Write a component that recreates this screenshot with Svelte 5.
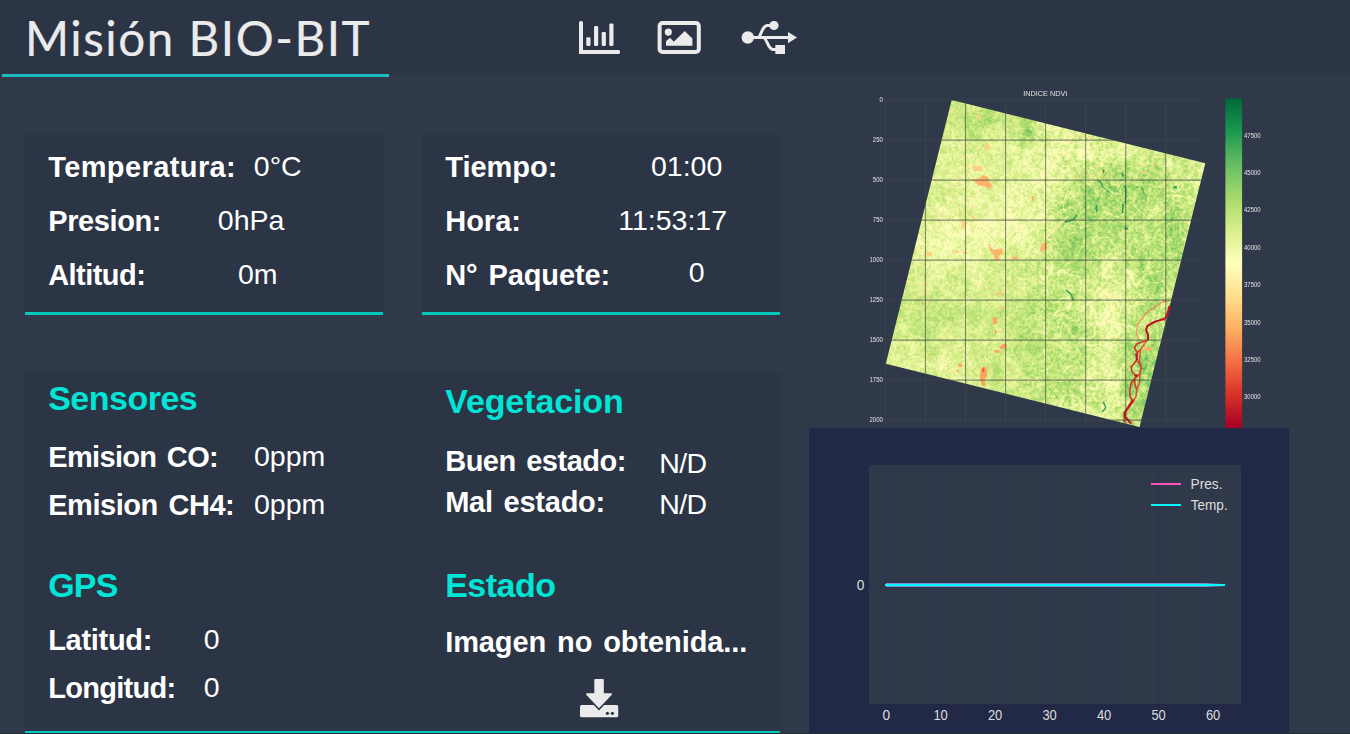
<script>
  import { onMount } from 'svelte';

  const weather = [
    { label: 'Temperatura:', value: '0°C', at: 205.6, ls: 0.4 },
    { label: 'Presion:', value: '0hPa', at: 169.6, ls: -0.4 },
    { label: 'Altitud:', value: '0m', at: 189.8, ls: -0.55 }
  ];
  const timing = [
    { label: 'Tiempo:', value: '01:00', at: 205.8, ls: 0 },
    { label: 'Hora:', value: '11:53:17', at: 173, ls: 0 },
    { label: 'N° Paquete:', value: '0', at: 243.6, ls: -0.1, dy: -3 }
  ];
  const sensors = [
    { label: 'Emision CO:', value: '0ppm', at: 205.8, ls: -0.65 },
    { label: 'Emision CH4:', value: '0ppm', at: 205.8, ls: -0.45 }
  ];
  const gps = [
    { label: 'Latitud:', value: '0', at: 155.6, ls: -0.3 },
    { label: 'Longitud:', value: '0', at: 155.6, ls: -0.7 }
  ];
  const vegetation = [
    { label: 'Buen estado:', value: 'N/D', at: 214, ls: -0.5, dy: 2, vls: -0.6 },
    { label: 'Mal estado:', value: 'N/D', at: 214, ls: -0.25, dy: 2, vls: -0.6 }
  ];

  const mapRows = [0, 250, 500, 750, 1000, 1250, 1500, 1750, 2000];
  const mapCols = [0, 1, 2, 3, 4, 5, 6, 7];
  const scaleTicks = [47500, 45000, 42500, 40000, 37500, 35000, 32500, 30000];
  const timeTicks = [0, 10, 20, 30, 40, 50, 60];

  const ramp = [
    [165, 0, 38], [215, 48, 39], [244, 109, 67], [253, 174, 97], [254, 224, 139],
    [255, 255, 191], [217, 239, 139], [166, 217, 106], [102, 189, 99], [26, 152, 80], [0, 104, 55]
  ];
  const rampStops = ramp.map((c, i) => ({ offset: 1 - i / 10, color: `rgb(${c.join(',')})` })).reverse();

  // x, y, radius x, radius y, index offset
  const regions = [
    [975, 118, 34, 14, 0.06], [1027, 130, 8, 16, 0.11], [990, 225, 55, 32, -0.05],
    [940, 245, 45, 28, -0.03], [965, 165, 50, 25, -0.01], [1030, 190, 20, 40, -0.03],
    [1060, 150, 14, 35, -0.03], [1068, 205, 20, 18, 0.07], [1105, 195, 26, 24, 0.1],
    [1150, 190, 38, 32, 0.07], [1070, 245, 28, 26, 0.08], [1130, 245, 45, 30, 0.05],
    [1175, 240, 14, 45, 0.08], [930, 320, 45, 35, 0.03], [1030, 330, 30, 50, 0.06],
    [1075, 320, 20, 50, 0.06], [1105, 330, 14, 60, -0.04], [1152, 290, 14, 30, 0.09],
    [1133, 380, 14, 45, 0.12], [1150, 360, 12, 35, 0.1], [996, 372, 5, 16, 0.08],
    [940, 364, 60, 7, -0.03], [1060, 385, 40, 18, 0.05], [970, 213, 14, 8, 0.06],
    [1110, 150, 25, 9, -0.03]
  ];

  function hash(x, y, s) {
    let h = Math.imul(x, 374761393) + Math.imul(y, 668265263) + Math.imul(s, 974634777);
    h = Math.imul(h ^ (h >>> 13), 1274126177);
    return ((h ^ (h >>> 16)) >>> 0) / 4294967295;
  }
  function noise(x, y, s) {
    const xi = Math.floor(x), yi = Math.floor(y);
    let u = x - xi, v = y - yi;
    u = u * u * (3 - 2 * u);
    v = v * v * (3 - 2 * v);
    const a = hash(xi, yi, s), b = hash(xi + 1, yi, s);
    const c = hash(xi, yi + 1, s), d = hash(xi + 1, yi + 1, s);
    return a + (b - a) * u + (c - a) * v + (a - b - c + d) * u * v;
  }
  function ndvi(x, y) {
    let v = 0.595;
    for (const [cx, cy, rx, ry, k] of regions) {
      v += k * Math.exp(-(((x - cx) / rx) ** 2 + ((y - cy) / ry) ** 2));
    }
    const green = Math.max(0, Math.min(1, (x - 1000) / 60));
    v += (noise(x / 15, y / 15, 1) - 0.5) * 0.05;
    v += (noise(x / 6, y / 6, 2) - 0.5) * 0.06;
    v += (noise(x / 2.3, y / 2.3, 3) - 0.5) * (0.1 + 0.04 * green);
    v += (hash(x, y, 4) - 0.5) * (0.06 + 0.02 * green);
    const wx = x + noise(x / 9, y / 9, 7) * 12, wy = y + noise(x / 9, y / 9, 8) * 12;
    const ridge = 1 - Math.abs(2 * noise(wx / 14, wy / 14, 5) - 1) * 7;
    if (ridge > 0) v -= ridge * 0.09 * green;
    const fleck = noise(x / 2, y / 2, 9) + noise(x / 22, y / 22, 10) * 0.35;
    if (fleck > 1.13 && (x < 1020 || y < 180)) v = 0.38;
    return Math.max(0.35, Math.min(0.84, v));
  }
  function colorAt(v) {
    const t = v * 10, i = Math.min(9, Math.floor(t)), f = t - i;
    return ramp[i].map((c, k) => c + (ramp[i + 1][k] - c) * f);
  }

  let canvas;
  onMount(() => {
    const ctx = canvas.getContext('2d');
    const img = ctx.createImageData(480, 354);
    for (let y = 0; y < 354; y++) {
      for (let x = 0; x < 480; x++) {
        const [r, g, b] = colorAt(ndvi(x + 809, y + 74));
        img.data.set([r, g, b, 255], (y * 480 + x) * 4);
      }
    }
    ctx.putImageData(img, 0, 0);
    ctx.globalCompositeOperation = 'destination-in';
    ctx.beginPath();
    ctx.moveTo(142.7, 26);
    ctx.lineTo(396.3, 89.2);
    ctx.lineTo(330.5, 353);
    ctx.lineTo(76.8, 289.8);
    ctx.closePath();
    ctx.fill();
  });
</script>

{#snippet readings(rows)}
  {#each rows as r}
    <div class="row">
      <span class="label" style="width:{r.at}px; letter-spacing:{r.ls}px">{r.label}</span>
      <span class="value" style="margin-top:{r.dy ?? -1}px; letter-spacing:{r.vls ?? 0}px">{r.value}</span>
    </div>
  {/each}
{/snippet}

<div class="page">
  <header>
    <h1><span>Misión BIO-BIT</span></h1>
    <nav>
      <svg width="42" height="34" viewBox="579 21 42 34">
        <rect x="579" y="21" width="4" height="33" rx="1.5" />
        <rect x="579" y="50" width="41" height="4" rx="1.5" />
        <rect x="586.3" y="37.3" width="4.2" height="8.7" rx="1.3" />
        <rect x="594" y="26" width="4.2" height="20" rx="1.3" />
        <rect x="601.7" y="32" width="4.2" height="14" rx="1.3" />
        <rect x="609.3" y="23.5" width="4.2" height="22.5" rx="1.3" />
      </svg>
      <svg width="44" height="34" viewBox="657 21 44 34">
        <rect x="659.6" y="23" width="39.2" height="29" rx="3" fill="none" stroke="#ebebeb" stroke-width="4" />
        <circle cx="668.3" cy="32.1" r="3.6" />
        <path d="M666 45.8V41.3L670 37.8L673.8 41.8L684.7 31L692.4 38.4V45.8Z" />
      </svg>
      <svg width="57" height="34" viewBox="741 21 57 34">
        <circle cx="747.8" cy="37.5" r="6.2" />
        <path d="M788 32L797 37.5L788 43.2Z" />
        <circle cx="774" cy="25.5" r="4.6" />
        <rect x="775.3" y="45" width="9.7" height="9" />
        <path d="M752 37.5H789M758.5 37.5C762 34 762 25.5 767.5 25.5H771M764 37.5C767.5 40 768 49.5 773.5 49.5H777" fill="none" stroke="#ebebeb" stroke-width="3" />
      </svg>
    </nav>
  </header>

  <main>
    <div class="data">
      <div class="cards">
        <section class="card">{@render readings(weather)}</section>
        <section class="card">{@render readings(timing)}</section>
      </div>
      <section class="wide">
        <div class="col">
          <h2>Sensores</h2>
          <div class="group sensors">{@render readings(sensors)}</div>
          <h2 class="gps">GPS</h2>
          <div class="group position">{@render readings(gps)}</div>
        </div>
        <div class="col right">
          <h2 class="plants">Vegetacion</h2>
          <div class="group veg">{@render readings(vegetation)}</div>
          <h2 class="status">Estado</h2>
          <p class="label message">Imagen no obtenida...</p>
          <svg class="download" width="39" height="39" viewBox="580 679 39 39">
            <rect x="580" y="705" width="38.2" height="12.2" rx="1.5" />
            <path d="M595 679H603Q603.8 679 603.8 680V693.3H611.4Q612.6 693.6 611.6 695L599 708.3L586.4 695Q585.6 693.6 586.8 693.3H594.3V680Q594.3 679 595 679Z" stroke="#2c3545" stroke-width="3" paint-order="stroke" />
            <circle cx="607.4" cy="713.3" r="1.6" fill="#2c3545" />
            <circle cx="612.4" cy="713.3" r="1.6" fill="#2c3545" />
          </svg>
        </div>
      </section>
    </div>

    <div class="plots">
      <div class="map">
        <canvas bind:this={canvas} width="480" height="354"></canvas>
        <svg width="480" height="354" viewBox="809 74 480 354">
          <defs>
            <linearGradient id="ramp" x1="0" y1="0" x2="0" y2="1">
              {#each rampStops as s}<stop offset={s.offset} stop-color={s.color} />{/each}
            </linearGradient>
          </defs>

          <g transform="translate(860 80) scale(.3333)" fill="#fdb56c">
            <path d="M330 299L355 297L370 285L385 292L388 305L398 318L387 326L372 318L355 317L345 305Z" />
            <path d="M336 262L345 258H366L368 273L342 274Z" fill="#fdd080" />
            <path d="M385 496L400 510L425 505L430 520L415 528L420 540H405L400 522L390 512Z" />
            <path d="M455 530H472L476 538H458ZM545 490L560 488L562 505L548 515L540 512ZM515 348H522V362H516Z" />
            <path d="M198 515H215L217 528L200 530ZM375 195L388 190L390 208L375 210ZM280 512H298V518H283ZM308 514L325 516L322 521H310ZM305 422H314V444H305Z" fill="#fdd080" />
            <path d="M398 712L410 712L412 730L400 735ZM405 745L412 758L404 762ZM417 800L432 790L442 795L438 806L420 808ZM362 870L370 858L380 865L382 885L374 900L376 920L364 915L360 895ZM295 852L306 850L307 860L296 862ZM288 870H298L294 878ZM404 810H418V818H402Z" fill="#fca55d" />
            <path d="M410 640L425 632L425 645L412 648ZM418 680L436 678L438 685H420Z" fill="#fdc777" />
            <path d="M366 863L374 866L372 876L366 876Z" fill="#ee6040" />
          </g>
          <path d="M1045 239L1052 231L1060 224L1068 216" fill="none" stroke="#f7efa0" stroke-width="3" stroke-opacity=".8" />
          <g transform="translate(1040 80) scale(.3333)" fill="none" stroke="#1d9150" stroke-width="4" stroke-opacity=".9">
            <path d="M172 300L183 308L189 322M246 280L250 290M253 316L258 330L256 370M250 372L247 400M110 405L100 420L74 426M172 374L168 384L171 398M191 268V280" />
            <path d="M305 320L312 340L320 348M189 322L215 342" stroke-width="2.5" />
            <path d="M78 630L92 642L101 662M190 965L197 983L187 996" />
            <path d="M400 322H411M253 446H265" stroke-width="8" stroke-opacity=".7" />
          </g>
          <g transform="translate(1040 250) scale(.3333)" fill="none" stroke-linejoin="round">
            <path d="M388 152L368 155L345 170L318 190L292 225L290 250L298 272" stroke="#f58a5b" stroke-width="3.5" />
            <path d="M312 292L332 290L335 300L318 306Z" fill="#fdb366" />
            <path d="M318 272L290 282L283 293L292 308L290 330L273 352L277 368L290 378L273 400L269 425L272 445L282 452L252 488L253 518M300 300L290 310M292 332L304 350L300 372L285 385L284 400L290 420" stroke="#d73027" stroke-width="4.5" />
            <path d="M389 168L381 200L372 208L345 215L322 228L318 240L326 262L315 280L302 298L298 330L304 350L300 370L298 400L290 420L288 440L275 460L258 485L256 500L277 523M384 186L372 212" stroke="#e04a35" stroke-width="4" />
            <path d="M389 168L381 196L374 206L345 215L322 228L318 240L324 255L324 270M288 310L291 330M278 450L256 486L255 500L272 520M292 375L284 377" stroke="#c50d27" stroke-width="6" />
          </g>

          <g stroke="#3f4946" stroke-opacity=".62">
            {#each mapCols as i}
              <line x1={885.4 + i * 40.05} x2={885.4 + i * 40.05} y1="100" y2="428" stroke-width="1.1" />
            {/each}
            {#each mapRows as r, i}
              <line x1="885" x2="1205.5" y1={100.1 + i * 40} y2={100.1 + i * 40} stroke-width="1.4" />
            {/each}
          </g>

          <g class="tiny">
            {#each mapRows as r, i}
              <text x="882.9" y={102.4 + i * 40} text-anchor="end" textLength={String(r).length * 3.35} lengthAdjust="spacingAndGlyphs">{r}</text>
            {/each}
            {#each scaleTicks as t, i}
              <text x="1244" y={137.6 + i * 37.4} textLength="16.7" lengthAdjust="spacingAndGlyphs">{t}</text>
            {/each}
          </g>
          <text class="title" x="1023.3" y="96.4" textLength="44" lengthAdjust="spacingAndGlyphs">INDICE NDVI</text>
          <rect x="1225.4" y="98.3" width="16.7" height="330" fill="url(#ramp)" />
        </svg>
      </div>

      <svg class="chart" width="480" height="305" viewBox="809 428 480 305">
        <rect x="869" y="465" width="372" height="239" fill="#303949" />
        <g stroke="#2a3459" stroke-width="1.2">
          {#each timeTicks as t}
            <line x1={886.4 + t * 5.45} x2={886.4 + t * 5.45} y1="465" y2="704" />
          {/each}
          <line x1="869" x2="1241" y1="585.3" y2="585.3" />
        </g>
        <path d="M886 583H1205L1225 584.2V586L1205 587H886Z" fill="#7c8fcc" />
        <line x1="885" x2="1225" y1="585" y2="585" stroke="#08f7fe" stroke-width="2" />
        <line x1="1151" x2="1181" y1="484" y2="484" stroke="#fe53bb" stroke-width="2" />
        <line x1="1151" x2="1181" y1="505" y2="505" stroke="#08f7fe" stroke-width="2" />
        <g class="ticks">
          <text x="1190.5" y="489" textLength="32" lengthAdjust="spacingAndGlyphs">Pres.</text>
          <text x="1190.7" y="510" textLength="37" lengthAdjust="spacingAndGlyphs">Temp.</text>
          <text x="860.6" y="590" text-anchor="middle" textLength="7.6" lengthAdjust="spacingAndGlyphs">0</text>
          {#each timeTicks as t}
            <text x={886.4 + t * 5.45 - (t ? 0.3 : 0)} y="720" text-anchor="middle" textLength={t ? 14.4 : 7.6} lengthAdjust="spacingAndGlyphs">{t}</text>
          {/each}
        </g>
      </svg>
    </div>
  </main>
</div>

<style>
  :global(body) {
    margin: 0;
    background: #303949;
  }
  .page {
    width: 1350px;
    height: 733px;
    overflow: hidden;
    border-bottom: 1px solid #232b36;
    background: #303949;
    color: #fff;
    font-family: 'Liberation Sans', Arial, sans-serif;
  }
  svg {
    display: block;
    fill: #ebebeb;
  }
  header {
    display: flex;
    height: 74px;
    background: #2c3545;
  }
  h1 {
    box-sizing: border-box;
    width: 387px;
    height: 77px;
    margin: 0 190px 0 2px;
    padding-left: 23px;
    border-bottom: 3px solid #1fbabf;
    font: 400 47.5px/75px Lato, sans-serif;
    letter-spacing: 1.55px;
    color: #ebebeb;
    white-space: nowrap;
    -webkit-text-stroke: 0.2px #ebebeb;
  }
  nav {
    display: flex;
    gap: 36px;
    padding-top: 21px;
  }
  nav svg:last-child {
    margin-left: 4px;
  }
  main {
    display: flex;
  }
  .data {
    width: 755px;
    padding: 60px 29px 0 25px;
  }
  .cards {
    display: flex;
    justify-content: space-between;
  }
  .card {
    box-sizing: border-box;
    width: 358px;
    height: 181px;
    padding: 6px 0 0 23.2px;
    border-bottom: 3px solid #00c8ba;
    background: #2c3545;
  }
  .row {
    display: flex;
    align-items: flex-start;
    height: 54px;
    line-height: 54px;
    font-size: 28.5px;
    white-space: nowrap;
  }
  .label {
    flex: none;
    font-size: 29px;
    font-weight: 700;
    word-spacing: 3px;
  }
  .wide {
    box-sizing: border-box;
    display: grid;
    grid-template-columns: 397px 1fr;
    height: 360px;
    margin-top: 58px;
    padding: 5px 0 0 23.2px;
    border-bottom: 2px solid #00c8ba;
    background: #2c3545;
  }
  h2 {
    margin: 0;
    font-size: 34px;
    line-height: 40px;
    letter-spacing: -0.5px;
    color: #00e5d5;
  }
  .plants {
    letter-spacing: -0.1px;
  }
  .group .row {
    height: 48px;
    line-height: 48px;
  }
  .sensors {
    margin-top: 15px;
  }
  .gps {
    margin-top: 36px;
    letter-spacing: -0.8px;
  }
  .position {
    margin-top: 11px;
  }
  .right {
    padding-top: 3px;
  }
  .veg {
    margin-top: 20px;
  }
  .veg .row {
    height: 41px;
    line-height: 41px;
  }
  .status {
    margin-top: 42px;
  }
  .message {
    margin: 13px 0 0;
    line-height: 48px;
    letter-spacing: -0.1px;
  }
  .download {
    margin: 13px 0 0 134.8px;
  }
  .plots {
    width: 480px;
  }
  .map {
    display: grid;
  }
  .map > * {
    grid-area: 1 / 1;
  }
  .chart {
    background: #212946;
  }
  .tiny {
    font-size: 6.3px;
    fill: #e4e4e4;
  }
  .title {
    font-size: 7.3px;
    fill: #e0e0e0;
  }
  .ticks {
    font-size: 14.6px;
    fill: #dedede;
  }
</style>
